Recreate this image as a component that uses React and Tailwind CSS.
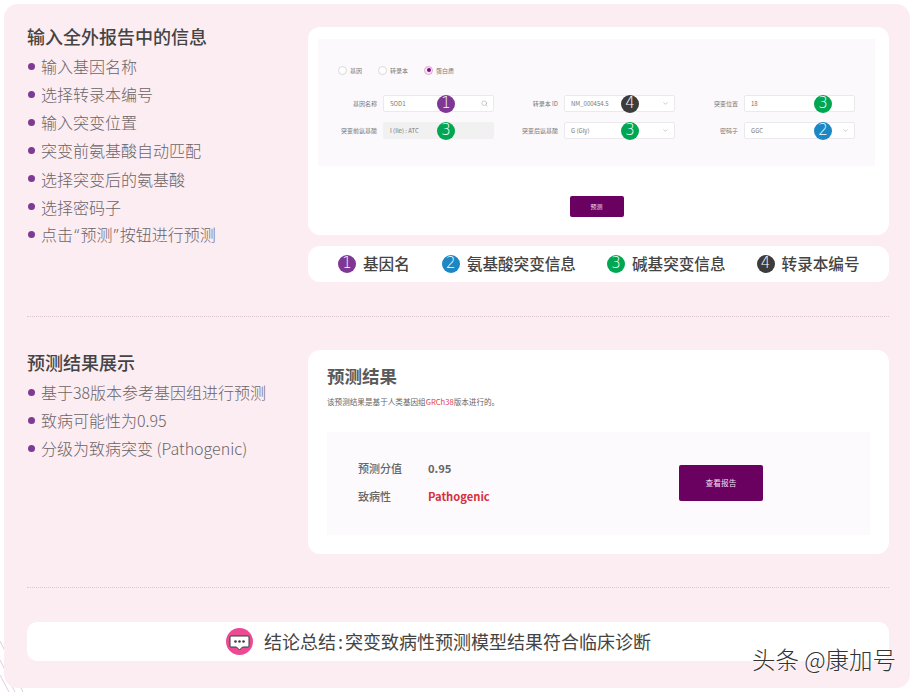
import { Search, ChevronDown } from 'lucide-react'

const FONT = 'font-["Noto_Sans_CJK_SC","Noto_Sans",sans-serif]'

function Badge({ n, color, className = '' }) {
  return (
    <span className={`flex items-center justify-center w-[18px] h-[18px] rounded-full font-["DejaVu_Sans_Light","DejaVu_Sans",sans-serif] font-extralight text-[15px] text-white leading-none ${color} ${className}`}>
      {n}
    </span>
  )
}

function Bullets({ items }) {
  return (
    <ul>
      {items.map((item, i) => (
        <li key={i} className="flex items-center h-[28.15px] text-[16px] text-[#6b6468] font-light whitespace-pre">
          <span className="w-[7px] h-[7px] rounded-full bg-[#7f3a96] ml-px mr-[6px] shrink-0" />
          <span>{item}</span>
        </li>
      ))}
    </ul>
  )
}

function Radio({ label, checked }) {
  return (
    <div className="flex items-center gap-[3px] text-[6px] text-[#777]">
      <span className={`w-[9px] h-[9px] rounded-full border flex items-center justify-center ${checked ? 'border-[#d9a9d4] bg-[#f6e6f4]' : 'border-[#d8d8d8] bg-white'}`}>
        {checked && <span className="w-[4px] h-[4px] rounded-full bg-[#8a0a7e]" />}
      </span>
      {label}
    </div>
  )
}

function Field({ label, value, badge, badgeLeft, disabled, icon }) {
  return (
    <div className="flex items-center justify-end gap-[6px]">
      <span className="text-[6px] text-[#777] whitespace-nowrap">{label}</span>
      <div className={`relative flex items-center justify-between w-[111px] h-[17px] pr-[5px] rounded-[2px] text-[6px] text-[#777] ${disabled ? 'pl-[7px] bg-[#f1f1f1]' : 'pl-[6px] bg-white border border-[#ebe9ee]'}`}>
        <span>{value}</span>
        {icon === 'search' && <Search size={7} className="text-[#aaa]" />}
        {icon === 'chevron' && <ChevronDown size={7} className="text-[#aaa]" />}
        <Badge n={badge.n} color={badge.color} className={`absolute top-1/2 -translate-y-1/2 ${badgeLeft}`} />
      </div>
    </div>
  )
}

const PURPLE = 'bg-[#7e3795]'
const BLUE = 'bg-[#1b87c4]'
const GREEN = 'bg-[#00a651]'
const DARK = 'bg-[#3c3c3c]'

function Legend({ n, color, text }) {
  return (
    <div className="flex items-center gap-[7px]">
      <Badge n={n} color={color} />
      <span className="text-[15.6px] font-medium text-[#444]">{text}</span>
    </div>
  )
}

function Divider({ className = '' }) {
  return <div className={`border-t border-dotted border-[#dcc6d2] ${className}`} />
}

function ChatIcon() {
  return (
    <svg width="27" height="27" viewBox="0 0 27 27" className="shrink-0">
      <circle cx="13.5" cy="13.5" r="13.5" fill="#ec4a94" />
      <path d="M5 8h17a1 1 0 0 1 1 1v9a1 1 0 0 1-1 1h-5.5l-3 3-3-3H5a1 1 0 0 1-1-1V9a1 1 0 0 1 1-1z" fill="#fff" stroke="#3a3a3a" strokeWidth="1" />
      <circle cx="9.5" cy="13.5" r="1.3" fill="#3a3a3a" />
      <circle cx="13.5" cy="13.5" r="1.3" fill="#3a3a3a" />
      <circle cx="17.5" cy="13.5" r="1.3" fill="#3a3a3a" />
    </svg>
  )
}

const Quote = ({ c }) => <span className='font-["Noto_Sans",sans-serif] px-[1.2px]'>{c}</span>

export default function App() {
  return (
    <div className={`relative w-[916px] h-[692px] overflow-hidden bg-white pt-[4px] pl-[4px] ${FONT}`}>
      {/* corner decoration */}
      <svg width="30" height="60" viewBox="0 0 30 60" className="absolute left-0 bottom-0">
        <g fill="none" stroke="#dcbcdc" strokeWidth="0.8">
          <path d="M0 9 L5 19" />
          <path d="M0 28 L5 38" />
          <path d="M0 43 L9 60" />
          <path d="M12 54 L15 60" />
          <path d="M20 54 L23 60" />
        </g>
      </svg>

      <div className="relative w-[906px] h-[684px] rounded-[14px] bg-[#fcedf2] pt-[23px] pl-[23px] pr-[21px]">
        <div className="flex">
          <div className="w-[281px]">
            <h2 className="text-[18px] leading-[18px] font-medium text-[#444]">输入全外报告中的信息</h2>
            <div className="mt-[7px]">
              <Bullets items={['输入基因名称', '选择转录本编号', '输入突变位置', '突变前氨基酸自动匹配', '选择突变后的氨基酸', '选择密码子', <>点击<Quote c="“" />预测<Quote c="”" />按钮进行预测</>]} />
            </div>
          </div>
          <div className="w-[581px]">
            <div className="h-[208px] rounded-[12px] bg-white pt-[12px] pl-[10px]">
              <div className="w-[557px]">
                <div className="h-[127px] bg-[#fbf9fc] pt-[26px] px-[20px]">
                  <div className="flex items-center h-[10px]">
                    <Radio label="基因" />
                    <div className="ml-[16px]"><Radio label="转录本" /></div>
                    <div className="ml-[16px]"><Radio label="蛋白质" checked /></div>
                  </div>
                  <div className="grid grid-cols-[156px_181px_180px] gap-y-[10px] mt-[20px]">
                    <Field label="基因名称" value="SOD1" badge={{ n: 1, color: PURPLE }} badgeLeft="left-[53px]" icon="search" />
                    <Field label="转录本 ID" value="NM_000454.5" badge={{ n: 4, color: DARK }} badgeLeft="left-[56px]" icon="chevron" />
                    <Field label="突变位置" value="18" badge={{ n: 3, color: GREEN }} badgeLeft="left-[69px]" />
                    <Field label="突变前氨基酸" value="I (Ile) : ATC" badge={{ n: 3, color: GREEN }} badgeLeft="left-[54px]" disabled />
                    <Field label="突变后氨基酸" value="G (Gly)" badge={{ n: 3, color: GREEN }} badgeLeft="left-[56px]" icon="chevron" />
                    <Field label="密码子" value="GGC" badge={{ n: 2, color: BLUE }} badgeLeft="left-[69px]" icon="chevron" />
                  </div>
                </div>
                <div className="flex justify-center mt-[30px]">
                  <button className="w-[54px] h-[21px] rounded-[2px] bg-[#6a0060] text-[6px] text-[#f3dff0]">预测</button>
                </div>
              </div>
            </div>
            <div className="flex items-center h-[36px] mt-[11px] pl-[30px] rounded-[12px] bg-white">
              <Legend n={1} color={PURPLE} text="基因名" />
              <div className="ml-[32px]"><Legend n={2} color={BLUE} text="氨基酸突变信息" /></div>
              <div className="ml-[31px]"><Legend n={3} color={GREEN} text="碱基突变信息" /></div>
              <div className="ml-[31px]"><Legend n={4} color={DARK} text="转录本编号" /></div>
            </div>
          </div>
        </div>

        <Divider className="mt-[34px]" />

        <div className="flex mt-[33px]">
          <div className="w-[281px] pt-[3px]">
            <h2 className="text-[18px] leading-[18px] font-medium text-[#444]">预测结果展示</h2>
            <div className="mt-[7px]">
              <Bullets items={['基于38版本参考基因组进行预测', '致病可能性为0.95', '分级为致病突变 (Pathogenic)']} />
            </div>
          </div>
          <div className="w-[581px] h-[204px] rounded-[12px] bg-white pt-[15px] pl-[19px]">
            <h3 className="text-[17.5px] leading-[22px] font-bold text-[#5a5a5a]">预测结果</h3>
            <p className="mt-[10px] text-[7.6px] leading-[10px] text-[#666]">
              该预测结果是基于人类基因组<span className="text-[#e0404a]">GRCh38</span>版本进行的。
            </p>
            <div className="flex items-center justify-between w-[543px] h-[103px] mt-[25px] pb-[2px] pl-[31px] pr-[107px] bg-[#fdfafe]">
              <div className="grid grid-cols-[70px_auto] gap-y-[13px] items-center">
                <span className="text-[11px] leading-[15px] font-medium text-[#666]">预测分值</span>
                <span className="text-[11.2px] leading-[15px] font-bold text-[#666]">0.95</span>
                <span className="text-[11px] leading-[15px] font-medium text-[#666]">致病性</span>
                <span className="text-[11.2px] leading-[15px] font-bold text-[#d6303a]">Pathogenic</span>
              </div>
              <button className="w-[84px] h-[36px] rounded-[2px] bg-[#6a0060] text-[7.7px] text-[#f3dff0]">查看报告</button>
            </div>
          </div>
        </div>

        <Divider className="mt-[33px]" />

        <div className="flex items-center gap-[11px] h-[39px] mt-[34px] pl-[199px] rounded-[10px] bg-white">
          <ChatIcon />
          <span className="text-[18px] text-[#444]">结论总结<span className="px-[2px]">:</span>突变致病性预测模型结果符合临床诊断</span>
        </div>
      </div>

      {/* watermark */}
      <span className="absolute left-[752px] top-[645px] text-[23.5px] leading-[28px] font-light text-[#333] whitespace-nowrap [text-shadow:0_0_2px_#fff,0_0_2px_#fff]">头条 @康加号</span>
    </div>
  )
}
